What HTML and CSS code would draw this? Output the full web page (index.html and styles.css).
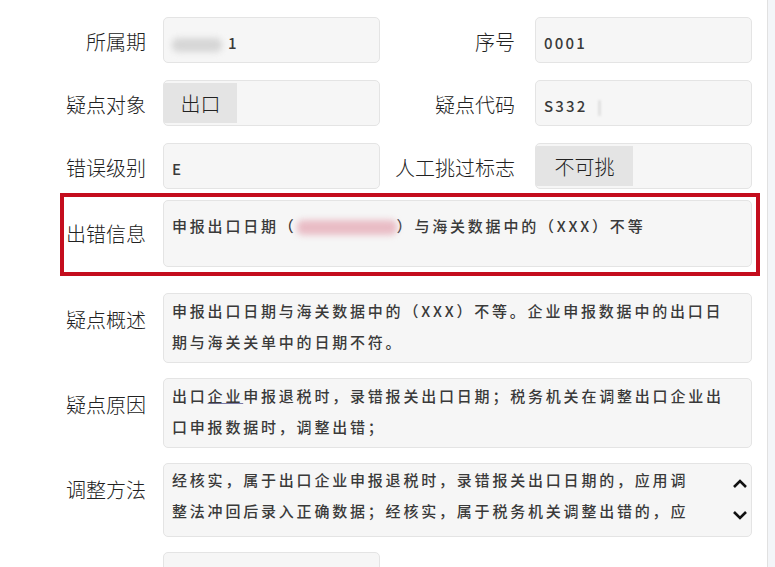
FILE: index.html
```html
<!DOCTYPE html>
<html lang="zh-CN">
<head>
  <meta charset="UTF-8" />
  <title>疑点详情</title>
  <link rel="stylesheet" href="styles.css">
</head>
<body>
  <div class="page">
    <div class="form">
      <div class="grid">
        <div class="label">所属期</div>
        <div class="field"><span class="val"><span class="blur"></span>1</span></div>
        <div class="label label-r">序号</div>
        <div class="field"><span class="val">0001</span></div>

        <div class="label">疑点对象</div>
        <div class="field"><span class="chip">出口</span></div>
        <div class="label label-r">疑点代码</div>
        <div class="field"><span class="val">S332<span class="blur blur-thin"></span></span></div>

        <div class="label">错误级别</div>
        <div class="field"><span class="val">E</span></div>
        <div class="label label-r">人工挑过标志</div>
        <div class="field"><span class="chip chip-wide">不可挑</span></div>
      </div>

      <div class="flag">
        <div class="label">出错信息</div>
        <div class="wide wide-flag">申报出口日期（<span class="blur blur-pink"></span>）与海关数据中的（XXX）不等</div>
      </div>

      <div class="row">
        <div class="label">疑点概述</div>
        <div class="wide">申报出口日期与海关数据中的（XXX）不等。企业申报数据中的出口日期与海关关单中的日期不符。</div>
      </div>

      <div class="row">
        <div class="label">疑点原因</div>
        <div class="wide">出口<span class="link">企业</span>申报退税时，录错报关出口日期；税务机关在调整出口企业出口申报数据时，调整出错；</div>
      </div>

      <div class="row">
        <div class="label">调整方法</div>
        <div class="wide wide-scroll">
          <div class="scroll-text">经核实，属于出口企业申报退税时，录错报关出口日期的，应用调整法冲回后录入正确数据；经核实，属于税务机关调整出错的，应</div>
          <div class="arrows">
            <svg width="16" height="11" viewBox="0 0 16 11"><polyline points="2,9 8,3 14,9" fill="none" stroke="#111" stroke-width="2.6"/></svg>
            <svg width="16" height="11" viewBox="0 0 16 11"><polyline points="2,2 8,8 14,2" fill="none" stroke="#111" stroke-width="2.6"/></svg>
          </div>
        </div>
      </div>

      <div class="row">
        <div class="label"></div>
        <div class="field field-last"></div>
      </div>
    </div>
    <div class="edge"></div>
  </div>
</body>
</html>
```

FILE: styles.css
```css
body {
  margin: 0;
  background: #fff;
  font-family: "Noto Sans CJK SC", "Liberation Sans", sans-serif;
  color: #222;
}
.page {
  display: flex;
  height: 567px;
  overflow: hidden;
}
.form {
  width: 767px;
  padding-top: 17px;
}
.edge {
  flex: 1;
  border-left: 1px solid #e1e1e1;
  background: #f3f5f8;
}
.grid {
  display: grid;
  grid-template-columns: 163px 217px 155px 217px;
  row-gap: 17px;
  align-items: center;
}
.label {
  box-sizing: border-box;
  text-align: right;
  padding-right: 17px;
  font-size: 20px;
  line-height: 24px;
  font-weight: 300;
  color: #222;
  white-space: nowrap;
}
.grid .label {
  padding-top: 4px;
}
.label-r {
  padding-right: 20px;
}
.field {
  box-sizing: border-box;
  height: 46px;
  background: #f6f6f6;
  border: 1px solid #e4e4e4;
  border-radius: 5px;
  display: flex;
  align-items: center;
  overflow: hidden;
}
.val {
  padding: 5px 0 0 8px;
  font-size: 15px;
  font-weight: 500;
  letter-spacing: 2.2px;
  color: #3a3a3a;
}
.chip {
  align-self: stretch;
  margin: 2px 0;
  width: 73px;
  background: #e4e4e4;
  font-size: 20px;
  font-weight: 300;
  color: #222;
  display: flex;
  align-items: center;
  justify-content: center;
}
.chip-wide {
  width: 97px;
}
.blur {
  display: inline-block;
  width: 50px;
  height: 14px;
  margin-right: 6px;
  background: #d6d6d6;
  border-radius: 6px;
  filter: blur(3px);
  vertical-align: middle;
}
.blur-thin {
  width: 3px;
  height: 16px;
  margin: 0 0 0 10px;
  background: #e0e0e0;
  filter: blur(1px);
}
.blur-pink {
  width: 100px;
  height: 15px;
  margin: 0;
  background: #e9bcc5;
}
.flag {
  box-sizing: border-box;
  display: flex;
  align-items: center;
  width: 700px;
  margin: 4px 0 17px 60px;
  padding: 3px 4px 5px 0;
  border: 4px solid #c40d1d;
}
.flag .label {
  width: 99px;
}
.row {
  display: flex;
  align-items: flex-start;
  margin-bottom: 15px;
}
.row .label {
  width: 163px;
  padding-top: 15px;
}
.wide {
  box-sizing: border-box;
  width: 589px;
  height: 70px;
  padding: 1px 20px 0 8px;
  background: #f6f6f6;
  border: 1px solid #e4e4e4;
  border-radius: 5px;
  font-size: 15px;
  font-weight: 500;
  line-height: 31px;
  letter-spacing: 2.8px;
  color: #3a3a3a;
  overflow: hidden;
}
.wide-flag {
  height: 67px;
  padding-top: 9px;
}
.link {
  color: #3a3a3a;
  text-decoration: underline;
  text-decoration-color: #7a7aa8;
}
.wide-scroll {
  height: 74px;
  padding: 0 3px 0 8px;
  display: flex;
  justify-content: space-between;
}
.scroll-text {
  width: 524px;
  height: 62px;
  overflow: hidden;
}
.arrows {
  display: flex;
  flex-direction: column;
  gap: 21px;
  padding-top: 14px;
}
.arrows svg {
  display: block;
}
.field-last {
  width: 217px;
}
```
